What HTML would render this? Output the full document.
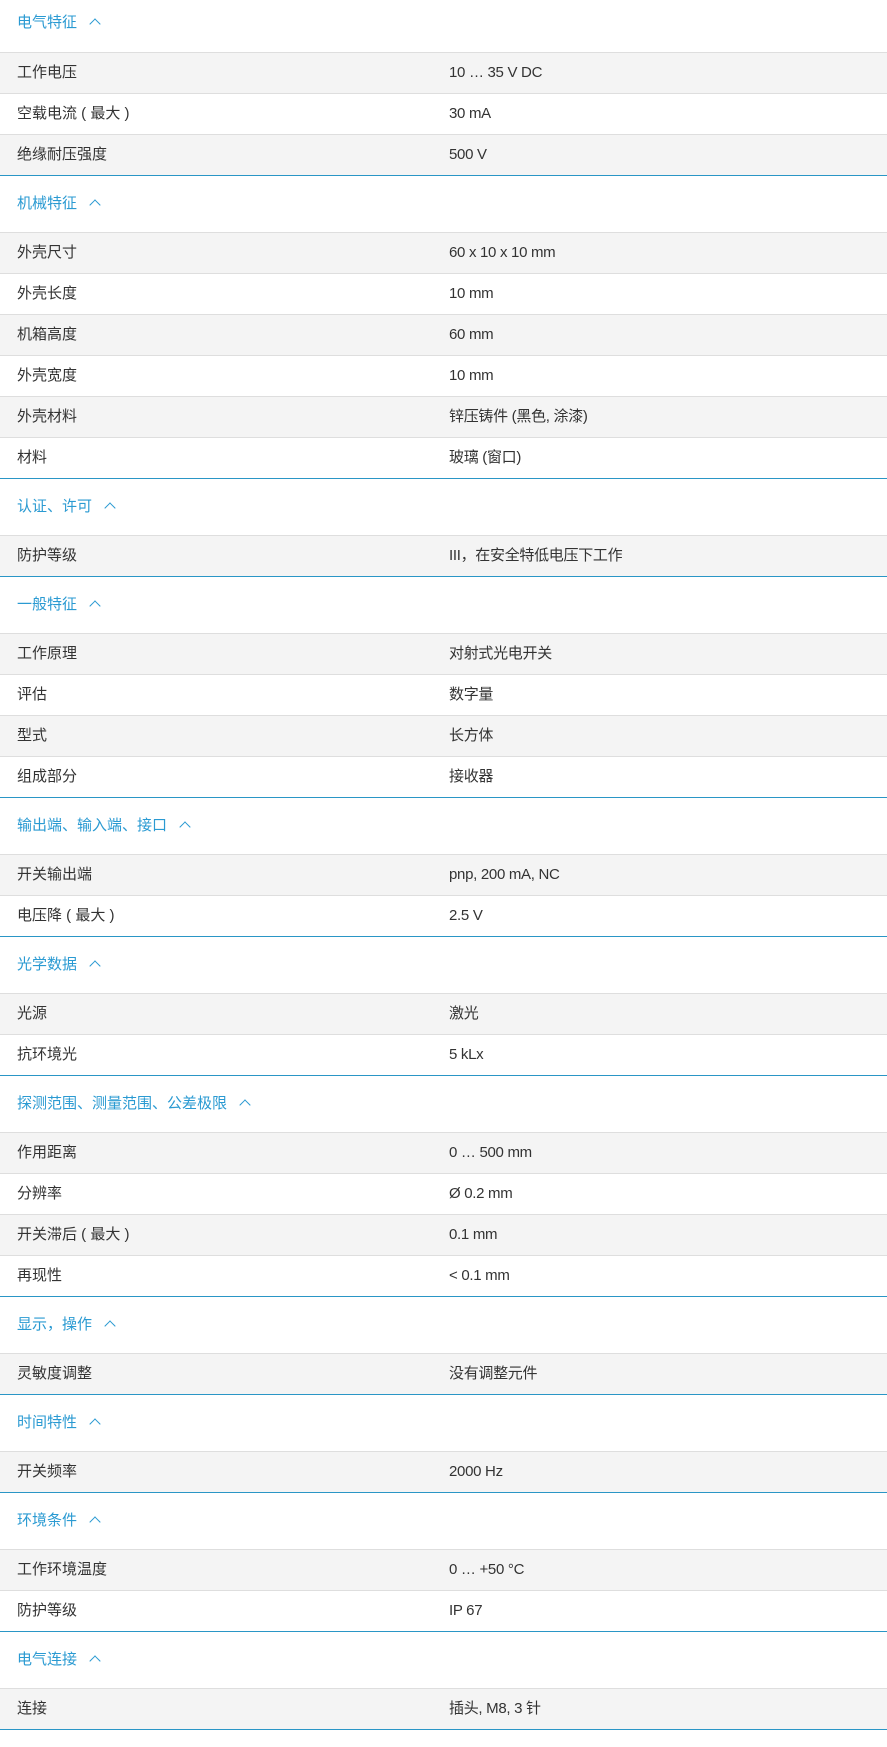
<!DOCTYPE html>
<html><head><meta charset="utf-8"><style>
body{margin:0;background:#fff;font-family:"Liberation Sans","Noto Sans CJK SC",sans-serif;font-size:15px;color:#333;width:887px;height:1747px;overflow:hidden}
.h{height:56px;line-height:56px;padding-left:17px;color:#2a9ad2;font-size:15px}
.h:first-child{height:52px;line-height:46px}
.h span{display:inline-block;width:7px;height:7px;border-left:1.5px solid #2a9ad2;border-top:1.5px solid #2a9ad2;transform:rotate(45deg);margin-left:14px;position:relative;top:1px}
.r{height:40px;line-height:40px;border-top:1px solid #dedede;position:relative}
.g{background:#f4f4f4}
.r b{font-weight:normal;position:absolute;left:17px}
.r i{font-style:normal;position:absolute;left:449px;letter-spacing:-0.3px}
.s{border-bottom:1px solid #2a96c6}
</style></head><body>
<div class="h">电气特征<span></span></div>
<div class="s"><div class="r g"><b>工作电压</b><i>10 … 35 V DC</i></div><div class="r"><b>空载电流 ( 最大 )</b><i>30 mA</i></div><div class="r g"><b>绝缘耐压强度</b><i>500 V</i></div></div>
<div class="h">机械特征<span></span></div>
<div class="s"><div class="r g"><b>外壳尺寸</b><i>60 x 10 x 10 mm</i></div><div class="r"><b>外壳长度</b><i>10 mm</i></div><div class="r g"><b>机箱高度</b><i>60 mm</i></div><div class="r"><b>外壳宽度</b><i>10 mm</i></div><div class="r g"><b>外壳材料</b><i>锌压铸件 (黑色, 涂漆)</i></div><div class="r"><b>材料</b><i>玻璃 (窗口)</i></div></div>
<div class="h">认证、许可<span></span></div>
<div class="s"><div class="r g"><b>防护等级</b><i>III，在安全特低电压下工作</i></div></div>
<div class="h">一般特征<span></span></div>
<div class="s"><div class="r g"><b>工作原理</b><i>对射式光电开关</i></div><div class="r"><b>评估</b><i>数字量</i></div><div class="r g"><b>型式</b><i>长方体</i></div><div class="r"><b>组成部分</b><i>接收器</i></div></div>
<div class="h">输出端、输入端、接口<span></span></div>
<div class="s"><div class="r g"><b>开关输出端</b><i>pnp, 200 mA, NC</i></div><div class="r"><b>电压降 ( 最大 )</b><i>2.5 V</i></div></div>
<div class="h">光学数据<span></span></div>
<div class="s"><div class="r g"><b>光源</b><i>激光</i></div><div class="r"><b>抗环境光</b><i>5 kLx</i></div></div>
<div class="h">探测范围、测量范围、公差极限<span></span></div>
<div class="s"><div class="r g"><b>作用距离</b><i>0 … 500 mm</i></div><div class="r"><b>分辨率</b><i>Ø 0.2 mm</i></div><div class="r g"><b>开关滞后 ( 最大 )</b><i>0.1 mm</i></div><div class="r"><b>再现性</b><i>&lt; 0.1 mm</i></div></div>
<div class="h">显示，操作<span></span></div>
<div class="s"><div class="r g"><b>灵敏度调整</b><i>没有调整元件</i></div></div>
<div class="h">时间特性<span></span></div>
<div class="s"><div class="r g"><b>开关频率</b><i>2000 Hz</i></div></div>
<div class="h">环境条件<span></span></div>
<div class="s"><div class="r g"><b>工作环境温度</b><i>0 … +50 °C</i></div><div class="r"><b>防护等级</b><i>IP 67</i></div></div>
<div class="h">电气连接<span></span></div>
<div class="s"><div class="r g"><b>连接</b><i>插头, M8, 3 针</i></div></div>
</body></html>
